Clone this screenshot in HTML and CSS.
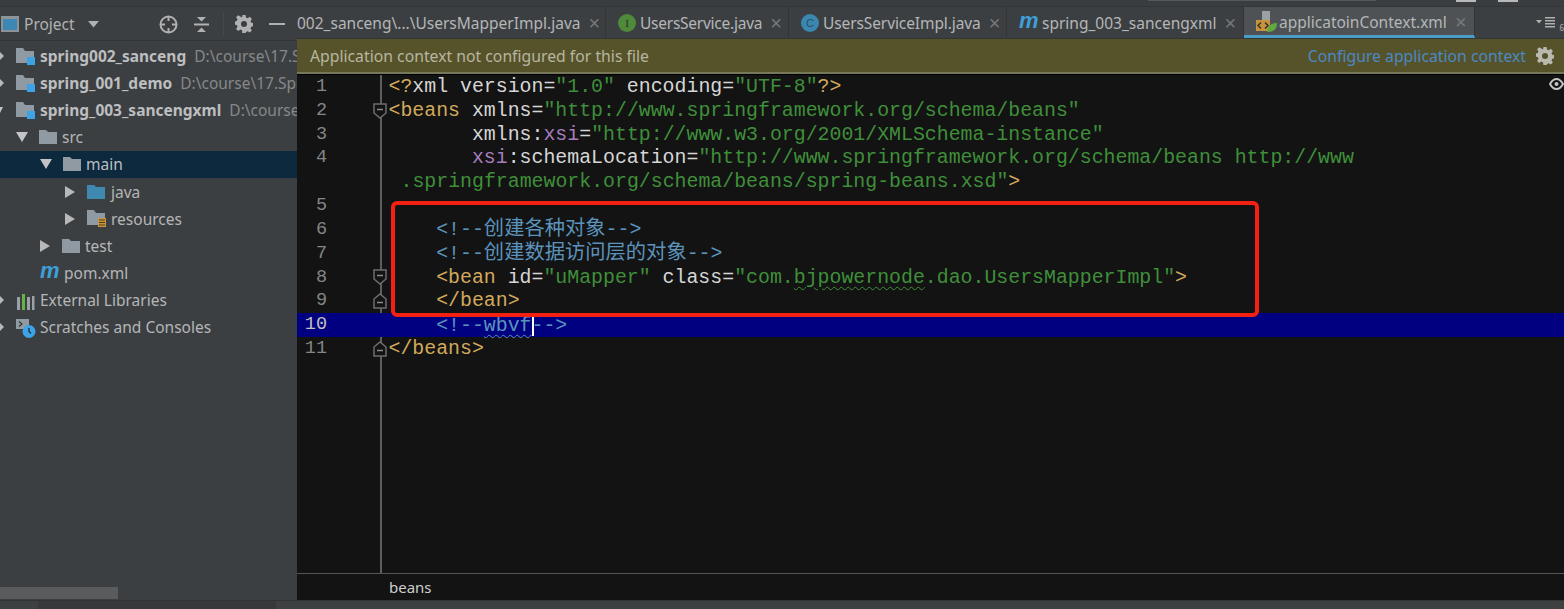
FILE: index.html
```html
<!DOCTYPE html>
<html lang="en">
<head>
<meta charset="utf-8">
<title>applicatoinContext.xml</title>
<link rel="stylesheet" href="styles.css">
</head>
<body>
<div class="topstrip"><span class="strip-bar"></span><span class="strip-bit"></span><span class="strip-bit"></span></div>
<div class="main">
  <aside class="side">
    <div class="side-head">
      <svg class="ic-project" width="22" height="18" viewBox="0 0 22 18"><rect x="0" y="0" width="18" height="16" fill="#8d9498"/><rect x="2" y="3" width="14" height="11" fill="#3d87b5"/></svg>
      <span class="side-title">Project</span>
      <svg class="ic-drop" width="11" height="7" viewBox="0 0 11 7"><path d="M0 0h11L5.500 6.500z" fill="#afb1b3"/></svg>
      <svg class="ic-target" width="19" height="19" viewBox="0 0 19 19" fill="none" stroke="#afb1b3" stroke-width="2"><circle cx="9.500" cy="9.500" r="8"/><path d="M9.500 1v5M9.500 13v5M1 9.500h5M13 9.500h5"/></svg>
      <svg class="ic-collapse" width="17" height="19" viewBox="0 0 17 19" fill="#afb1b3"><path d="M1 8.500h15v2H1zM4 2h9L8.500 6.500zM4 17h9l-4.500-4.500z"/></svg>
      <span class="head-sep"></span>
      <svg class="ic-gear" width="18" height="18" viewBox="0 0 18 18"><path fill="#afb1b3" fill-rule="evenodd" d="M7.500 0h3l.5 2.500 1.700.7 2.100-1.400 2.100 2.100-1.400 2.100.7 1.700 2.500.5v3l-2.500.5-.7 1.700 1.400 2.100-2.100 2.100-2.100-1.400-1.700.7-.5 2.500h-3L7 15.300l-1.700-.7-2.100 1.400-2.100-2.100 1.400-2.100-.7-1.700-2.500-.5v-3l2.500-.5.7-1.700-1.400-2.100 2.100-2.100 2.100 1.400L7 2.500zM9 6a3 3 0 100 6 3 3 0 000-6z"/></svg>
      <span class="ic-min"></span>
    </div>
    <ul class="tree">
      <li class="row"><span class="tw small"></span><svg class="fi" width="20" height="20" viewBox="0 0 20 20"><path d="M0 0h7l2 3h9v12H0z" fill="#8f9aa3"/><rect x="11" y="9" width="8" height="8" fill="#3ba3e6"/></svg><b>spring002_sanceng</b><span class="path">D:\course\17.Spring</span></li>
      <li class="row"><span class="tw small"></span><svg class="fi" width="20" height="20" viewBox="0 0 20 20"><path d="M0 0h7l2 3h9v12H0z" fill="#8f9aa3"/><rect x="11" y="9" width="8" height="8" fill="#3ba3e6"/></svg><b>spring_001_demo</b><span class="path">D:\course\17.Spring</span></li>
      <li class="row"><span class="tw small open"></span><svg class="fi" width="20" height="20" viewBox="0 0 20 20"><path d="M0 0h7l2 3h9v12H0z" fill="#8f9aa3"/><rect x="11" y="9" width="8" height="8" fill="#3ba3e6"/></svg><b>spring_003_sancengxml</b><span class="path">D:\course\17.Spring</span></li>
      <li class="row lv1"><span class="tw open"></span><svg class="fi" width="20" height="20" viewBox="0 0 20 20"><path d="M1 3h7l2 2h9v12H1z" fill="#8f9aa3"/></svg>src</li>
      <li class="row lv2 selected"><span class="tw open"></span><svg class="fi" width="20" height="20" viewBox="0 0 20 20"><path d="M1 3h7l2 2h9v12H1z" fill="#8f9aa3"/></svg>main</li>
      <li class="row lv3"><span class="tw"></span><svg class="fi" width="20" height="20" viewBox="0 0 20 20"><path d="M0 3h7l2 2h9v12H0z" fill="#3f88b0"/></svg>java</li>
      <li class="row lv3"><span class="tw"></span><svg class="fi" width="20" height="20" viewBox="0 0 20 20"><path d="M0 1h7l2 3h9v5h-6v7H0z" fill="#8f9aa3"/><path d="M11 9h8v9h-8z" fill="#c8963e"/><path d="M12 11h6M12 13.500h6M12 16h6" stroke="#4a3d20"/></svg>resources</li>
      <li class="row lv2"><span class="tw"></span><svg class="fi" width="20" height="20" viewBox="0 0 20 20"><path d="M1 3h7l2 2h9v12H1z" fill="#8f9aa3"/></svg>test</li>
      <li class="row lv1b"><span class="ic-m">m</span>pom.xml</li>
      <li class="row"><span class="tw small"></span><svg class="fi" width="20" height="20" viewBox="0 0 20 20"><path d="M1 5h3v13H1zM11 5h3v13h-3z" fill="#9aa2a8"/><path d="M6 2h3v16H6z" fill="#62b543"/><path d="M16 4h2.500v14H16z" fill="#9aa2a8"/></svg>External Libraries</li>
      <li class="row"><span class="tw small"></span><svg class="fi" width="20" height="20" viewBox="0 0 20 20"><path d="M0 0h13v10H0z" fill="#8f9aa3"/><path d="M3 2.500l3 2.500-3 2.500" fill="none" stroke="#333" stroke-width="1.200"/><circle cx="13" cy="12.500" r="6.500" fill="#3ba3e6"/><path d="M13 9v3.500l2 2" fill="none" stroke="#24323c" stroke-width="1.400"/></svg>Scratches and Consoles</li>
    </ul>
    <div class="side-scroll"><span class="thumb"></span></div>
  </aside>
  <section class="work">
    <nav class="tabs">
      <div class="tab first"><span class="clip">002_sanceng\...\UsersMapperImpl.java</span><span class="x">×</span></div>
      <div class="tab t2"><span class="badge green">I</span>UsersService.java<span class="x">×</span></div>
      <div class="tab t3"><span class="badge blue">C</span>UsersServiceImpl.java<span class="x">×</span></div>
      <div class="tab t4"><span class="ic-m tabm">m</span>spring_003_sancengxml<span class="x">×</span></div>
      <div class="tab active"><svg class="xmlic" width="22" height="22" viewBox="0 0 22 22"><path d="M6 0h8v9H6z" fill="#9aa2a8"/><path d="M0 9h14v11H0z" fill="#c8933a"/><path d="M5 11.500l-3 3 3 3M9 11.500l3 3-3 3" fill="none" stroke="#333" stroke-width="1.500"/><path d="M11 21c0-6 4-9 10-9 0 6-3 9-10 9z" fill="#62a83e"/></svg>applicatoinContext.xml<span class="x">×</span></div>
      <div class="tabs-end"><svg width="20" height="11" viewBox="0 0 20 11"><path d="M0 3h6L3 6.500z" fill="#aeb0b2"/><path d="M9 0h10v1.500H9zM9 3h10v1.500H9zM9 6h10v1.500H9zM9 9h10v1.500H9z" fill="#aeb0b2"/></svg><span class="tabs-count">6</span></div>
    </nav>
    <div class="banner">
      <span>Application context not configured for this file</span>
      <a class="cfg">Configure application context</a>
      <svg width="18" height="18" viewBox="0 0 18 18"><path fill="#b9b9b0" fill-rule="evenodd" d="M7.500 0h3l.5 2.500 1.700.7 2.100-1.400 2.100 2.100-1.400 2.100.7 1.700 2.500.5v3l-2.500.5-.7 1.700 1.400 2.100-2.100 2.100-2.100-1.400-1.700.7-.5 2.500h-3L7 15.300l-1.700-.7-2.100 1.400-2.100-2.100 1.400-2.100-.7-1.700-2.500-.5v-3l2.500-.5.7-1.700-1.400-2.100 2.100-2.100 2.100 1.400L7 2.500zM9 6a3 3 0 100 6 3 3 0 000-6z"/></svg>
    </div>
    <div class="editor">
      <div class="line"><span class="no">1</span><span class="fold"></span><code><i class="t">&lt;?</i><i class="a">xml version=</i><i class="s">"1.0"</i><i class="a"> encoding=</i><i class="s">"UTF-8"</i><i class="t">?&gt;</i></code></div>
      <div class="line"><span class="no">2</span><span class="fold"><svg class="mark" width="14" height="16" viewBox="0 0 14 16"><path d="M1 1h12v9l-6 5-6-5z" fill="#131313" stroke="#6e6e6e" stroke-width="1.500"/><path d="M4 6.500h6" stroke="#8a8a8a" stroke-width="1.500"/></svg></span><code><i class="t">&lt;beans</i><i class="a"> xmlns=</i><i class="s">"http://www.springframework.org/schema/beans"</i></code></div>
      <div class="line"><span class="no">3</span><span class="fold"></span><code><i class="a">       xmlns:</i><i class="p">xsi</i><i class="a">=</i><i class="s">"http://www.w3.org/2001/XMLSchema-instance"</i></code></div>
      <div class="line"><span class="no">4</span><span class="fold"></span><code><i class="p">       xsi</i><i class="a">:schemaLocation=</i><i class="s">"http://www.springframework.org/schema/beans http://www</i></code></div>
      <div class="line"><span class="no"></span><span class="fold"></span><code class="wrap"><i class="s">.springframework.org/schema/beans/spring-beans.xsd"</i><i class="t">&gt;</i></code></div>
      <div class="line"><span class="no">5</span><span class="fold"></span><code></code></div>
      <div class="line"><span class="no">6</span><span class="fold"></span><code><i class="c">    &lt;!--<span class="cjk">创建各种对象</span>--&gt;</i></code></div>
      <div class="line"><span class="no">7</span><span class="fold"></span><code><i class="c">    &lt;!--<span class="cjk">创建数据访问层的对象</span>--&gt;</i></code></div>
      <div class="line"><span class="no">8</span><span class="fold"><svg class="mark" width="14" height="16" viewBox="0 0 14 16"><path d="M1 1h12v9l-6 5-6-5z" fill="#131313" stroke="#6e6e6e" stroke-width="1.500"/><path d="M4 6.500h6" stroke="#8a8a8a" stroke-width="1.500"/></svg></span><code><i class="t">    &lt;bean</i><i class="a"> id=</i><i class="s">"uMapper"</i><i class="a"> class=</i><i class="s">"com.<span class="typo">bjpowernode</span>.dao.UsersMapperImpl"</i><i class="t">&gt;</i></code></div>
      <div class="line"><span class="no">9</span><span class="fold"><svg class="mark" width="14" height="16" viewBox="0 0 14 16"><path d="M1 15h12V6L7 1 1 6z" fill="#131313" stroke="#6e6e6e" stroke-width="1.500"/><path d="M4 9.500h6" stroke="#8a8a8a" stroke-width="1.500"/></svg></span><code><i class="t">    &lt;/bean&gt;</i></code></div>
      <div class="line current"><span class="no">10</span><span class="fold"></span><code><i class="c">    &lt;!--<span class="typo">wbvf</span><span class="caret"></span>--&gt;</i></code></div>
      <div class="line"><span class="no">11</span><span class="fold"><svg class="mark" width="14" height="16" viewBox="0 0 14 16"><path d="M1 15h12V6L7 1 1 6z" fill="#131313" stroke="#6e6e6e" stroke-width="1.500"/><path d="M4 9.500h6" stroke="#8a8a8a" stroke-width="1.500"/></svg></span><code><i class="t">&lt;/beans&gt;</i></code></div>
      <svg class="eye" width="15" height="12" viewBox="0 0 15 12"><path d="M1 6c2-3.500 3.500-5 6.500-5s4.500 1.500 6.500 5c-2 3.500-3.500 5-6.500 5S3 9.500 1 6z" fill="none" stroke="#c4c4c4" stroke-width="2"/><circle cx="7.500" cy="6" r="2" fill="#c4c4c4"/></svg>
      <div class="redbox"></div>
    </div>
    <div class="crumb">beans</div>
  </section>
</div>
<div class="bottom"><span class="bottom-mid"></span></div>
</body>
</html>
```
FILE: styles.css
```css
* { box-sizing: border-box; }
html, body { margin: 0; height: 100%; }
body {
  width: 1564px; height: 609px; overflow: hidden;
  display: flex; flex-direction: column;
  background: #3c3f41;
  color: #b4b6b8;
  font-family: "Noto Sans", "Open Sans", sans-serif;
  font-size: 15.500px;
}
.topstrip { height: 7px; flex: none; background: #3a3d3f; border-bottom: 1px solid #333537; display: flex; align-items: flex-start; padding-left: 1148px; gap: 22px; }
.strip-bar { width: 228px; height: 1px; background: #55585a; margin-right: 58px; }
.strip-bit { width: 20px; height: 2px; background: #b8b8b8; }
.main { flex: 1; display: flex; min-height: 0; }
.bottom { height: 9px; flex: none; background: #3e4142; border-top: 1px solid #333; padding-left: 38px; display: flex; }
.bottom-mid { width: 238px; background: #37393b; }

/* sidebar */
.side { width: 297px; flex: none; display: flex; flex-direction: column; overflow: hidden; background: #3c3f41; }
.side-head { height: 34px; flex: none; display: flex; align-items: center; border-bottom: 1px solid #323436; padding: 1px 0 0 1px; }
.ic-project { flex: none; transform: translateY(1px); }
.side-title { margin-left: 1px; width: 52px; font-size: 15.500px; color: #b0b2b4; }
.ic-drop { margin-left: 12px; flex: none; }
.ic-target { margin-left: 60px; flex: none; }
.ic-collapse { margin-left: 15px; flex: none; }
.head-sep { width: 1px; height: 24px; background: #46494b; margin-left: 13px; flex: none; }
.ic-gear { margin-left: 11px; flex: none; }
.ic-min { width: 16px; height: 2px; background: #afb1b3; margin-left: 16px; flex: none; }
.tree { list-style: none; margin: 1px 0 0; padding: 0; flex: 1; }
.row { height: 27.200px; display: flex; align-items: center; white-space: nowrap; font-size: 15.500px; color: #b4b6b8; }
.row b { font-weight: 700; color: #bcbec0; }
.row .path { margin-left: 8px; color: #85888a; }
.tw { flex: none; width: 0; height: 0; margin-right: 11px; border-left: 10px solid #b6b8ba; border-top: 6px solid transparent; border-bottom: 6px solid transparent; }
.tw.open { border-left: 6px solid transparent; border-right: 6px solid transparent; border-top: 10px solid #c2c4c6; border-bottom: 0; margin-right: 10px; }
.tw.small { margin-left: 0; margin-right: 12px; border-left-width: 4px; border-top-width: 4px; border-bottom-width: 4px; }
.tw.small.open { margin-left: -3px; margin-right: 13px; border-left-width: 3px; border-right-width: 3px; border-top-width: 6px; border-bottom: 0; }
.fi { flex: none; margin-right: 4px; transform: translateY(2px); }
.lv1 .tw { margin-left: 16px; }
.lv2 .tw { margin-left: 40px; }
.lv1 .fi, .lv2 .fi { margin-right: 4px; transform: none; }
.lv3 .tw { margin-left: 65px; margin-right: 12px; }
.lv3 .fi { margin-right: 4px; transform: none; }
.lv1b { padding-left: 40px; }
.selected { background: #0d293e; color: #bcbec0; }
.ic-m { color: #3d9fd8; font-family: "Liberation Sans", sans-serif; font-style: italic; font-weight: 700; font-size: 22px; line-height: 20px; width: 24px; flex: none; transform: translateY(-2px); }
.side-scroll { height: 13px; flex: none; }
.thumb { display: block; width: 118px; height: 12px; background: #595b5d; }

/* right side */
.work { flex: 1; min-width: 0; display: flex; flex-direction: column; position: relative; }
.tabs { height: 32px; flex: none; display: flex; align-items: stretch; background: #3c3f41; white-space: nowrap; font-size: 15.500px; color: #b4b6b8; border-bottom: 1px solid #323436; overflow: hidden; }
.tab { display: flex; align-items: center; padding: 0 0 0 12px; border-right: 1px solid #323436; flex: none; }
.tab.first { padding-left: 0; width: 309px; }
.t2 { width: 183px; letter-spacing: -.250px; }
.t3 { width: 218px; letter-spacing: -.100px; }
.t4 { width: 237px; }
.tab.active { width: 231px; background: #4e5254; border-bottom: 3px solid #4a9cc9; padding-top: 1px; }
.tab .x { margin-left: 8px; color: #77797b; font-size: 20px; line-height: 1; font-family: "Liberation Sans", sans-serif; }
.clip { display: block; }
.tabm { width: 23px; font-size: 22px; }
.badge { flex: none; width: 18px; height: 18px; border-radius: 50%; margin-right: 4px; display: flex; align-items: center; justify-content: center; font: 11px "Liberation Serif", serif; color: #2a2a2a; }
.badge.green { background: #4e8a3a; }
.badge.blue { background: #3b87b0; font-family: "Liberation Sans", sans-serif; color: #26506a; }
.xmlic { flex: none; margin-right: 1px; }
.tabs-end { margin-left: auto; display: flex; align-items: center; padding-right: 0; gap: 3px; }
.tabs-count { font-size: 8px; color: #aeb0b2; transform: translateY(5px); }

.banner { height: 35px; flex: none; display: flex; align-items: center; background: #56532a; border-bottom: 2px solid #77775a; padding: 1px 10px 0 13px; color: #b7b6a0; font-size: 15.750px; }
.cfg { margin-left: auto; margin-right: 10px; color: #4b88c4; }

.editor { flex: 1; min-height: 0; background: #131313; position: relative; border-top: 1px solid #000; overflow: hidden; }
.editor::before { content: ""; position: absolute; left: 83px; top: 0; bottom: 0; width: 2px; background: #5e5e5e; }
.line { height: 23.820px; line-height: 23.820px; display: flex; align-items: center; font-family: "Liberation Mono", monospace; font-size: 19.870px; position: relative; }
.no { width: 30px; flex: none; text-align: right; color: #858585; font-size: 18.500px; margin-right: 46px; }
.fold { width: 15.500px; flex: none; display: flex; align-items: center; height: 100%; position: relative; }
.mark { display: block; }
code { font: inherit; white-space: pre; }
code i { font-style: normal; }
.wrap { margin-left: 12px; }
.t { color: #d2a95c; }
.a { color: #d6d6d6; }
.s { color: #3f8f3a; }
.p { color: #a67cbf; }
.c { color: #5b93bd; }
.cjk { font-family: "Noto Sans CJK SC", sans-serif; font-size: 20.300px; line-height: 0; }
.typo { text-decoration: underline wavy 1px; text-underline-offset: 3px; }
.current { background: #000080; }
.current .no { color: #c2c2c2; }
.caret { display: inline-block; width: 2px; height: 23px; line-height: 0; background: #fff; vertical-align: -5px; margin-right: -2px; }
.eye { position: absolute; right: 0; top: 3px; }
.redbox { position: absolute; left: 94px; top: 126px; width: 868px; height: 116px; border: 4px solid #f42011; border-radius: 6px; }
.crumb { height: 27px; flex: none; background: #131313; border-top: 1px solid #555; padding-left: 92px; color: #cfcfcf; font-size: 15px; display: flex; align-items: center; }
```
